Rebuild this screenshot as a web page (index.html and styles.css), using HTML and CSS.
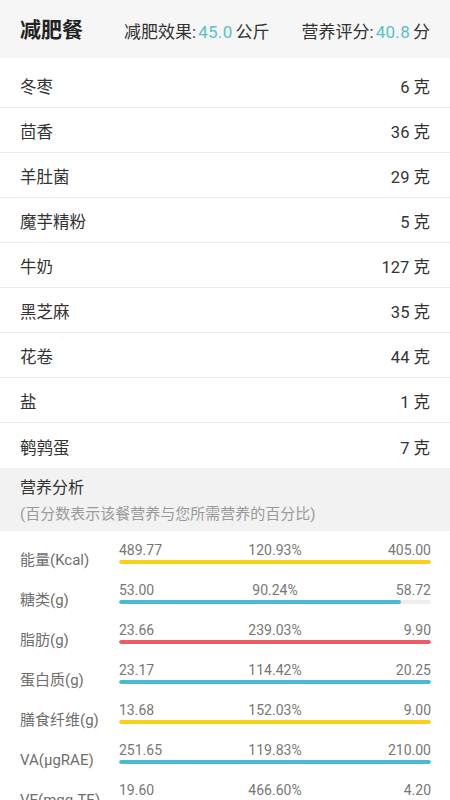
FILE: index.html
```html
<!DOCTYPE html>
<html lang="zh">
<head>
<meta charset="utf-8">
<link rel="stylesheet" href="styles.css">
</head>
<body>
<header class="top">
  <h1 class="title">减肥餐</h1>
  <div class="stats">
    <span class="stat">减肥效果:<em class="num">45.0</em>公斤</span>
    <span class="stat">营养评分:<em class="num">40.8</em>分</span>
  </div>
</header>

<ul class="foods">
  <li class="food"><span>冬枣</span><span>6 克</span></li>
  <li class="food"><span>茴香</span><span>36 克</span></li>
  <li class="food"><span>羊肚菌</span><span>29 克</span></li>
  <li class="food"><span>魔芋精粉</span><span>5 克</span></li>
  <li class="food"><span>牛奶</span><span>127 克</span></li>
  <li class="food"><span>黑芝麻</span><span>35 克</span></li>
  <li class="food"><span>花卷</span><span>44 克</span></li>
  <li class="food"><span>盐</span><span>1 克</span></li>
  <li class="food"><span>鹌鹑蛋</span><span>7 克</span></li>
</ul>

<section class="section-head">
  <div class="section-title">营养分析</div>
  <div class="section-sub">(百分数表示该餐营养与您所需营养的百分比)</div>
</section>

<div class="nutrients">
  <div class="nrow">
    <div class="nlabel">能量(Kcal)</div>
    <div class="nbar-wrap">
      <div class="nvals"><span>489.77</span><span class="mid">120.93%</span><span class="right">405.00</span></div>
      <div class="track"><div class="fill yellow" style="width:100%"></div></div>
    </div>
  </div>
  <div class="nrow">
    <div class="nlabel">糖类(g)</div>
    <div class="nbar-wrap">
      <div class="nvals"><span>53.00</span><span class="mid">90.24%</span><span class="right">58.72</span></div>
      <div class="track"><div class="fill blue" style="width:90.24%"></div></div>
    </div>
  </div>
  <div class="nrow">
    <div class="nlabel">脂肪(g)</div>
    <div class="nbar-wrap">
      <div class="nvals"><span>23.66</span><span class="mid">239.03%</span><span class="right">9.90</span></div>
      <div class="track"><div class="fill red" style="width:100%"></div></div>
    </div>
  </div>
  <div class="nrow">
    <div class="nlabel">蛋白质(g)</div>
    <div class="nbar-wrap">
      <div class="nvals"><span>23.17</span><span class="mid">114.42%</span><span class="right">20.25</span></div>
      <div class="track"><div class="fill blue" style="width:100%"></div></div>
    </div>
  </div>
  <div class="nrow">
    <div class="nlabel">膳食纤维(g)</div>
    <div class="nbar-wrap">
      <div class="nvals"><span>13.68</span><span class="mid">152.03%</span><span class="right">9.00</span></div>
      <div class="track"><div class="fill yellow" style="width:100%"></div></div>
    </div>
  </div>
  <div class="nrow">
    <div class="nlabel">VA(μgRAE)</div>
    <div class="nbar-wrap">
      <div class="nvals"><span>251.65</span><span class="mid">119.83%</span><span class="right">210.00</span></div>
      <div class="track"><div class="fill blue" style="width:100%"></div></div>
    </div>
  </div>
  <div class="nrow">
    <div class="nlabel">VE(mgα-TE)</div>
    <div class="nbar-wrap">
      <div class="nvals"><span>19.60</span><span class="mid">466.60%</span><span class="right">4.20</span></div>
      <div class="track"><div class="fill yellow" style="width:100%"></div></div>
    </div>
  </div>
</div>
</body>
</html>
```

FILE: styles.css
```css
* { box-sizing: border-box; }

html, body {
  margin: 0;
  padding: 0;
  background: #ffffff;
  font-family: "Roboto", "Noto Sans CJK SC", sans-serif;
  color: #333333;
}

.top {
  height: 58px;
  background: #f6f6f6;
  display: flex;
  align-items: center;
  padding: 2px 20px 0;
}

.title {
  margin: 0;
  font-size: 21px;
  font-weight: 700;
  color: #222222;
  line-height: 1;
}

.stats {
  margin-left: auto;
  display: flex;
  gap: 32px;
}

.stat {
  font-size: 17px;
  color: #333333;
}

.num {
  font-style: normal;
  color: #5cbfcb;
  margin: 0 3px 0 2px;
  letter-spacing: 0.3px;
}

.foods {
  list-style: none;
  margin: 5px 0 0;
  padding: 0;
}

.food {
  height: 45px;
  display: flex;
  align-items: center;
  justify-content: space-between;
  padding: 2px 20px 0;
  font-size: 16.5px;
  color: #333333;
  border-bottom: 1px solid #ededed;
}

.food:last-child {
  border-bottom: none;
}

.section-head {
  background: #f2f2f2;
  padding: 8px 20px 5px;
}

.section-title {
  font-size: 16px;
  line-height: 24px;
  color: #333333;
}

.section-sub {
  margin-top: 2px;
  font-size: 15px;
  line-height: 24px;
  color: #9a9a9a;
}

.nutrients {
  padding: 0 19px 0 20px;
}

.nrow {
  height: 40px;
  display: flex;
  padding-top: 10px;
}

.nlabel {
  width: 99px;
  flex: none;
  padding-top: 10px;
  font-size: 15px;
  line-height: 18px;
  color: #6e6e6e;
}

.nbar-wrap {
  flex: 1;
}

.nvals {
  display: grid;
  grid-template-columns: 1fr auto 1fr;
  font-size: 14px;
  line-height: 18px;
  color: #777777;
}

.nvals .mid { text-align: center; }
.nvals .right { text-align: right; }

.track {
  margin-top: 1px;
  height: 4px;
  border-radius: 2px;
  background: #eeeeee;
  overflow: hidden;
}

.fill {
  height: 100%;
  border-radius: 2px;
}

.yellow { background: #f6d116; }
.blue { background: #4db8cf; }
.red { background: #eb5b68; }
```
